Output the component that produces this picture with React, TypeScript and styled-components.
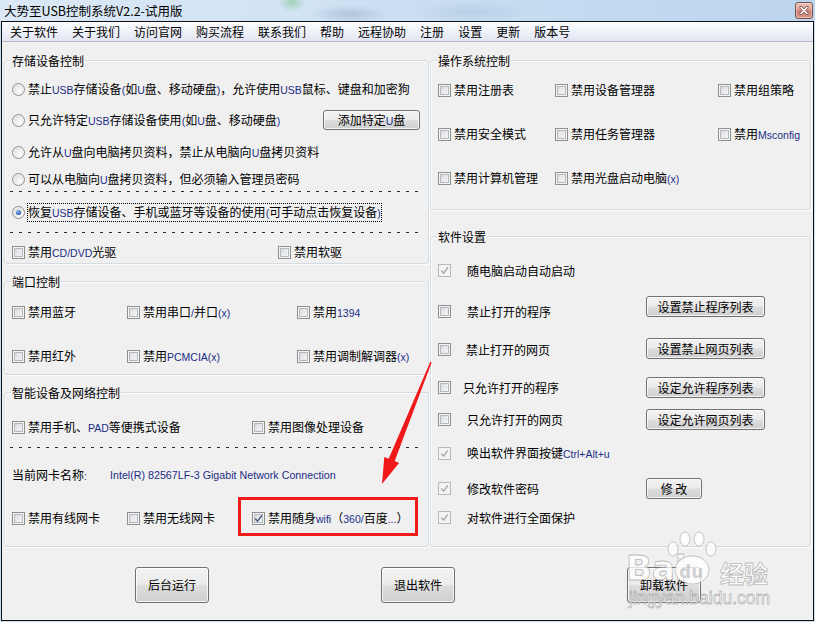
import React from "react";
import styled, { createGlobalStyle, css } from "styled-components";

const GlobalStyle = createGlobalStyle`
  html, body { margin: 0; padding: 0; background: #f0f0f0; }
  body {
    font-family: "Noto Sans CJK SC", "Noto Sans", sans-serif;
    font-size: 12px;
    color: #000;
  }
  #root { width: 815px; height: 622px; overflow: hidden; }
`;

const Window = styled.div`
  position: relative;
  width: 815px;
  height: 622px;
  display: flex;
  flex-direction: column;
  background: #c8dcf0;
  overflow: hidden;
`;

const TitleBar = styled.div`
  height: 21px;
  flex: none;
  display: flex;
  align-items: center;
  justify-content: space-between;
  padding: 0 2px 0 4px;
  box-sizing: border-box;
  background:
    radial-gradient(ellipse 14px 10px at 292px 2px, rgba(150, 205, 170, 0.8), transparent),
    radial-gradient(ellipse 40px 9px at 350px 14px, rgba(120, 145, 170, 0.35), transparent),
    radial-gradient(ellipse 60px 10px at 470px 12px, rgba(150, 175, 200, 0.3), transparent),
    linear-gradient(90deg, #dbe8f5 0%, #d2e3f4 35%, #c6dcf1 60%, #bcd5ee 100%);
`;

const TitleText = styled.span`
  font-size: 12.5px;
  line-height: 16px;
  white-space: nowrap;
`;

const CloseBtn = styled.div`
  width: 18px;
  height: 17px;
  box-sizing: border-box;
  border: 1px solid #7b4f4a;
  border-radius: 3px;
  background: linear-gradient(#eac3bb 0%, #d9a096 45%, #c77b6c 55%, #d89b8d 100%);
  box-shadow: inset 0 0 0 1px rgba(255, 255, 255, 0.35);
  display: flex;
  align-items: center;
  justify-content: center;
`;

const Frame = styled.div`
  flex: 1;
  min-height: 0;
  margin: 0 1px 1px 1px;
  border: 1px solid #111;
  background: #f0f0f0;
  display: flex;
  flex-direction: column;
`;

const MenuBar = styled.nav`
  height: 20px;
  flex: none;
  box-sizing: border-box;
  display: flex;
  align-items: center;
  padding-left: 1px;
  background: linear-gradient(#fdfdff 0%, #f1f3fa 45%, #e2e5f2 100%);
  border-bottom: 1px solid #b7bbcf;
`;

const MenuItem = styled.span`
  padding: 0 7px;
  line-height: 16px;
  white-space: nowrap;
`;

const Body = styled.div`
  flex: none;
  display: flex;
  gap: 1px;
  padding: 18px 2px 0 2px;
`;

const Column = styled.div<{ $w: number }>`
  width: ${(p) => p.$w}px;
  flex: none;
  display: flex;
  flex-direction: column;
`;

const Group = styled.section<{ $h: number; $mt?: number }>`
  position: relative;
  box-sizing: border-box;
  height: ${(p) => p.$h}px;
  margin-top: ${(p) => p.$mt ?? 0}px;
  border: 1px solid #d3dce3;
  border-radius: 3px;
  box-shadow: inset 1px 1px 0 #fcfcfc, 1px 1px 0 #fcfcfc;
  display: flex;
  flex-direction: column;
`;

const Legend = styled.span`
  position: absolute;
  top: -8px;
  left: 6px;
  padding: 0 1px;
  line-height: 16px;
  background: #f0f0f0;
  white-space: nowrap;
`;

const Row = styled.div<{ $mt: number; $cols?: string }>`
  margin-top: ${(p) => p.$mt}px;
  height: 20px;
  flex: none;
  padding-left: 7px;
  display: grid;
  grid-template-columns: ${(p) => p.$cols ?? "1fr"};
  align-items: center;
`;

const Dashed = styled.div<{ $mt: number }>`
  margin: ${(p) => p.$mt}px 6px 0 5px;
  height: 1px;
  flex: none;
  background: repeating-linear-gradient(90deg, #2a2a2a 0 3px, transparent 3px 9px);
`;

const Item = styled.span`
  display: inline-flex;
  align-items: center;
  white-space: nowrap;
`;

const Txt = styled.span<{ $gap?: number }>`
  margin-left: ${(p) => p.$gap ?? 3}px;
  line-height: 14px;
  white-space: nowrap;
`;

const Lat = styled.span`
  font-family: "Liberation Sans", Arial, sans-serif;
  font-size: 10.5px;
  color: #1b2d86;
`;

const NicName = styled.span`
  font-family: "Liberation Sans", Arial, sans-serif;
  font-size: 10.7px;
  color: #1b2d86;
  white-space: nowrap;
`;

const NicLabel = styled.span`
  width: 98px;
  line-height: 14px;
  white-space: nowrap;
`;

const Focus = styled.span`
  margin-left: 2px;
  padding: 1px 0;
  border: 1px dotted #000;
  line-height: 14px;
  white-space: nowrap;
`;

const BoxEl = styled.span<{ $disabled?: boolean }>`
  flex: none;
  width: 13px;
  height: 13px;
  box-sizing: border-box;
  display: inline-flex;
  align-items: center;
  justify-content: center;
  ${(p) =>
    p.$disabled
      ? css`
          border: 1px solid #b9b9b9;
          background: #f4f4f4;
        `
      : css`
          border: 1px solid #8e8f8f;
          background: linear-gradient(135deg, #d0d3d8 0%, #e9eaec 50%, #f8f8f8 100%);
          box-shadow: inset 0 0 0 1px #f5f5f5, inset 0 0 0 2px #b5b9be;
        `}
`;

const RadioEl = styled.span<{ $on?: boolean }>`
  flex: none;
  width: 13px;
  height: 13px;
  box-sizing: border-box;
  border-radius: 50%;
  border: 1px solid #8e8f8f;
  background: radial-gradient(circle at 62% 66%, #ffffff 0%, #eeeeee 35%, #cdd0d4 100%);
  box-shadow: inset 0 0 0 1px #f3f3f3;
  display: inline-flex;
  align-items: center;
  justify-content: center;
  ${(p) =>
    p.$on &&
    css`
      &::after {
        content: "";
        width: 5px;
        height: 5px;
        border-radius: 50%;
        background: radial-gradient(circle at 40% 35%, #a6c8f2 0%, #2f64b8 55%, #17438f 100%);
      }
    `}
`;

const Btn = styled.button<{ $w: number; $h: number }>`
  width: ${(p) => p.$w}px;
  height: ${(p) => p.$h}px;
  flex: none;
  box-sizing: border-box;
  padding: 0;
  border: 1px solid #707070;
  border-radius: 3px;
  background: linear-gradient(#f3f3f3 0%, #ebebeb 48%, #dddddd 52%, #cfcfcf 100%);
  box-shadow: inset 0 0 0 1px rgba(255, 255, 255, 0.75);
  font-family: "Noto Sans CJK SC", sans-serif;
  font-size: 12px;
  line-height: 14px;
  color: #000;
  white-space: nowrap;
`;

const SetRow = styled.div<{ $mt: number }>`
  margin-top: ${(p) => p.$mt}px;
  height: 21px;
  flex: none;
  padding-left: 7px;
  display: flex;
  align-items: flex-start;
`;

const SetLabel = styled.div<{ $dy?: number }>`
  width: 208px;
  height: 21px;
  flex: none;
  margin-top: ${(p) => p.$dy ?? 0}px;
  display: flex;
  align-items: center;
`;

const BottomBar = styled.div`
  flex: none;
  display: flex;
  gap: 172px;
  padding: 20px 0 0 133px;
`;

const Annotation = styled.div`
  position: absolute;
  left: 238px;
  top: 497px;
  width: 180px;
  height: 39px;
  box-sizing: border-box;
  border: 3px solid #f01c1c;
  pointer-events: none;
`;

const ArrowSvg = styled.svg`
  position: absolute;
  left: 370px;
  top: 355px;
  pointer-events: none;
`;

const Watermark = styled.svg`
  position: absolute;
  left: 615px;
  top: 522px;
  pointer-events: none;
`;

const Tick = ({ color }: { color: string }) => (
  <svg width="9" height="9" viewBox="0 0 9 9">
    <path d="M1.2 4.6 L3.6 7.2 L7.9 1.4" fill="none" stroke={color} strokeWidth="1.5" />
  </svg>
);

type CheckProps = {
  children: React.ReactNode;
  checked?: boolean;
  disabled?: boolean;
  gap?: number;
};

const Check = ({ children, checked, disabled, gap }: CheckProps) => (
  <Item>
    <BoxEl $disabled={disabled}>
      {checked && <Tick color={disabled ? "#a9a9a9" : "#4a5a80"} />}
    </BoxEl>
    <Txt $gap={gap}>{children}</Txt>
  </Item>
);

const Radio = ({ children, on }: { children: React.ReactNode; on?: boolean }) => (
  <Item>
    <RadioEl $on={on} />
    {on ? <Focus>{children}</Focus> : <Txt>{children}</Txt>}
  </Item>
);

const menus = [
  "关于软件",
  "关于我们",
  "访问官网",
  "购买流程",
  "联系我们",
  "帮助",
  "远程协助",
  "注册",
  "设置",
  "更新",
  "版本号",
];

export default function App() {
  return (
    <>
      <GlobalStyle />
      <Window>
        <TitleBar>
          <TitleText>大势至USB控制系统V2.2-试用版</TitleText>
          <CloseBtn>
            <svg width="10" height="9" viewBox="0 0 10 9">
              <path d="M2 1.5 L8 7.5 M8 1.5 L2 7.5" stroke="#7a4a44" strokeWidth="3" strokeLinecap="round" />
              <path d="M2 1.5 L8 7.5 M8 1.5 L2 7.5" stroke="#ffffff" strokeWidth="1.6" strokeLinecap="round" />
            </svg>
          </CloseBtn>
        </TitleBar>
        <Frame>
          <MenuBar>
            {menus.map((m) => (
              <MenuItem key={m}>{m}</MenuItem>
            ))}
          </MenuBar>
          <Body>
            <Column $w={425}>
              <Group $h={204}>
                <Legend>存储设备控制</Legend>
                <Row $mt={18}>
                  <Radio>
                    禁止<Lat>USB</Lat>存储设备<Lat>(</Lat>如<Lat>U</Lat>盘、移动硬盘<Lat>)</Lat>，允许使用<Lat>USB</Lat>鼠标、键盘和加密狗
                  </Radio>
                </Row>
                <Row $mt={11} $cols="311px auto">
                  <Radio>
                    只允许特定<Lat>USB</Lat>存储设备使用<Lat>(</Lat>如<Lat>U</Lat>盘、移动硬盘<Lat>)</Lat>
                  </Radio>
                  <Btn $w={97} $h={20}>
                    添加特定<Lat>U</Lat>盘
                  </Btn>
                </Row>
                <Row $mt={12}>
                  <Radio>
                    允许从<Lat>U</Lat>盘向电脑拷贝资料，禁止从电脑向<Lat>U</Lat>盘拷贝资料
                  </Radio>
                </Row>
                <Row $mt={7}>
                  <Radio>
                    可以从电脑向<Lat>U</Lat>盘拷贝资料，但必须输入管理员密码
                  </Radio>
                </Row>
                <Dashed $mt={2} />
                <Row $mt={10}>
                  <Radio on>
                    恢复<Lat>USB</Lat>存储设备、手机或蓝牙等设备的使用<Lat>(</Lat>可手动点击恢复设备<Lat>)</Lat>
                  </Radio>
                </Row>
                <Dashed $mt={10} />
                <Row $mt={9} $cols="266px 1fr">
                  <Check>
                    禁用<Lat>CD/DVD</Lat>光驱
                  </Check>
                  <Check>禁用软驱</Check>
                </Row>
              </Group>

              <Group $h={94} $mt={17}>
                <Legend>端口控制</Legend>
                <Row $mt={20} $cols="115px 170px 1fr">
                  <Check>禁用蓝牙</Check>
                  <Check>
                    禁用串口<Lat>/</Lat>并口<Lat>(x)</Lat>
                  </Check>
                  <Check>
                    禁用<Lat>1394</Lat>
                  </Check>
                </Row>
                <Row $mt={24} $cols="115px 170px 1fr">
                  <Check>禁用红外</Check>
                  <Check>
                    禁用<Lat>PCMCIA(x)</Lat>
                  </Check>
                  <Check>
                    禁用调制解调器<Lat>(x)</Lat>
                  </Check>
                </Row>
              </Group>

              <Group $h={155} $mt={17}>
                <Legend>智能设备及网络控制</Legend>
                <Row $mt={24} $cols="240px 1fr">
                  <Check>
                    禁用手机、<Lat>PAD</Lat>等便携式设备
                  </Check>
                  <Check>禁用图像处理设备</Check>
                </Row>
                <Dashed $mt={10} />
                <Row $mt={17} $cols="98px 1fr">
                  <NicLabel>
                    当前网卡名称<Lat>:</Lat>
                  </NicLabel>
                  <NicName>Intel(R) 82567LF-3 Gigabit Network Connection</NicName>
                </Row>
                <Row $mt={23} $cols="115px 125px 1fr">
                  <Check>禁用有线网卡</Check>
                  <Check>禁用无线网卡</Check>
                  <Check checked>
                    禁用随身<Lat>wifi</Lat>（<Lat>360/</Lat>百度<Lat>...</Lat>）
                  </Check>
                </Row>
              </Group>
            </Column>

            <Column $w={381}>
              <Group $h={150}>
                <Legend>操作系统控制</Legend>
                <Row $mt={19} $cols="117px 163px 1fr">
                  <Check>禁用注册表</Check>
                  <Check>禁用设备管理器</Check>
                  <Check>禁用组策略</Check>
                </Row>
                <Row $mt={24} $cols="117px 163px 1fr">
                  <Check>禁用安全模式</Check>
                  <Check>禁用任务管理器</Check>
                  <Check>
                    禁用<Lat>Msconfig</Lat>
                  </Check>
                </Row>
                <Row $mt={24} $cols="117px 163px 1fr">
                  <Check>禁用计算机管理</Check>
                  <Check>
                    禁用光盘启动电脑<Lat>(x)</Lat>
                  </Check>
                </Row>
              </Group>

              <Group $h={311} $mt={26}>
                <Legend>软件设置</Legend>
                <SetRow $mt={23}>
                  <SetLabel>
                    <Check checked disabled gap={16}>
                      随电脑启动自动启动
                    </Check>
                  </SetLabel>
                </SetRow>
                <SetRow $mt={15}>
                  <SetLabel $dy={5}>
                    <Check gap={16}>禁止打开的程序</Check>
                  </SetLabel>
                  <Btn $w={119} $h={21}>设置禁止程序列表</Btn>
                </SetRow>
                <SetRow $mt={21}>
                  <SetLabel $dy={1}>
                    <Check gap={15}>禁止打开的网页</Check>
                  </SetLabel>
                  <Btn $w={119} $h={21}>设置禁止网页列表</Btn>
                </SetRow>
                <SetRow $mt={18}>
                  <SetLabel>
                    <Check gap={12}>只允许打开的程序</Check>
                  </SetLabel>
                  <Btn $w={119} $h={21}>设定允许程序列表</Btn>
                </SetRow>
                <SetRow $mt={11}>
                  <SetLabel>
                    <Check gap={16}>只允许打开的网页</Check>
                  </SetLabel>
                  <Btn $w={119} $h={21}>设定允许网页列表</Btn>
                </SetRow>
                <SetRow $mt={13}>
                  <SetLabel>
                    <Check checked disabled gap={16}>
                      唤出软件界面按键<Lat>Ctrl+Alt+u</Lat>
                    </Check>
                  </SetLabel>
                </SetRow>
                <SetRow $mt={14}>
                  <SetLabel>
                    <Check checked disabled gap={16}>
                      修改软件密码
                    </Check>
                  </SetLabel>
                  <Btn $w={56} $h={21}>修 改</Btn>
                </SetRow>
                <SetRow $mt={8}>
                  <SetLabel>
                    <Check checked disabled gap={16}>
                      对软件进行全面保护
                    </Check>
                  </SetLabel>
                </SetRow>
              </Group>
            </Column>
          </Body>
          <BottomBar>
            <Btn $w={74} $h={36}>后台运行</Btn>
            <Btn $w={74} $h={36}>退出软件</Btn>
            <Btn $w={74} $h={36}>卸载软件</Btn>
          </BottomBar>
        </Frame>

        <Annotation />

        <ArrowSvg width="70" height="135" viewBox="0 0 70 135">
          <polygon
            points="60.3,6.7 61.7,7.3 24.7,106.1 29.1,107.9 12,129 14.3,101.9 18.7,103.7"
            fill="#f01818"
          />
        </ArrowSvg>

        <Watermark width="170" height="95" viewBox="0 0 170 95">
          <g fill="rgba(255,255,255,0.78)" stroke="rgba(130,130,130,0.55)" strokeWidth="0.8">
            <text x="11" y="58" fontFamily="DejaVu Sans, sans-serif" fontWeight="bold" fontSize="34">
              Bai
            </text>
            <ellipse cx="58" cy="27" rx="5" ry="7" />
            <ellipse cx="70" cy="17" rx="5" ry="7" />
            <ellipse cx="84" cy="17" rx="5" ry="7" />
            <ellipse cx="96" cy="27" rx="5" ry="7" />
            <ellipse cx="77" cy="48" rx="17" ry="14" />
            <text x="105" y="61" fontFamily="Noto Sans CJK SC, sans-serif" fontWeight="bold" fontSize="24">
              经验
            </text>
            <text x="14" y="82" fontFamily="Liberation Sans, Arial, sans-serif" fontSize="17.5">
              jingyan.baidu.com
            </text>
          </g>
          <text
            x="64"
            y="56"
            fontFamily="DejaVu Sans, sans-serif"
            fontWeight="bold"
            fontSize="17"
            fill="rgba(170,170,170,0.55)"
          >
            du
          </text>
        </Watermark>
      </Window>
    </>
  );
}
